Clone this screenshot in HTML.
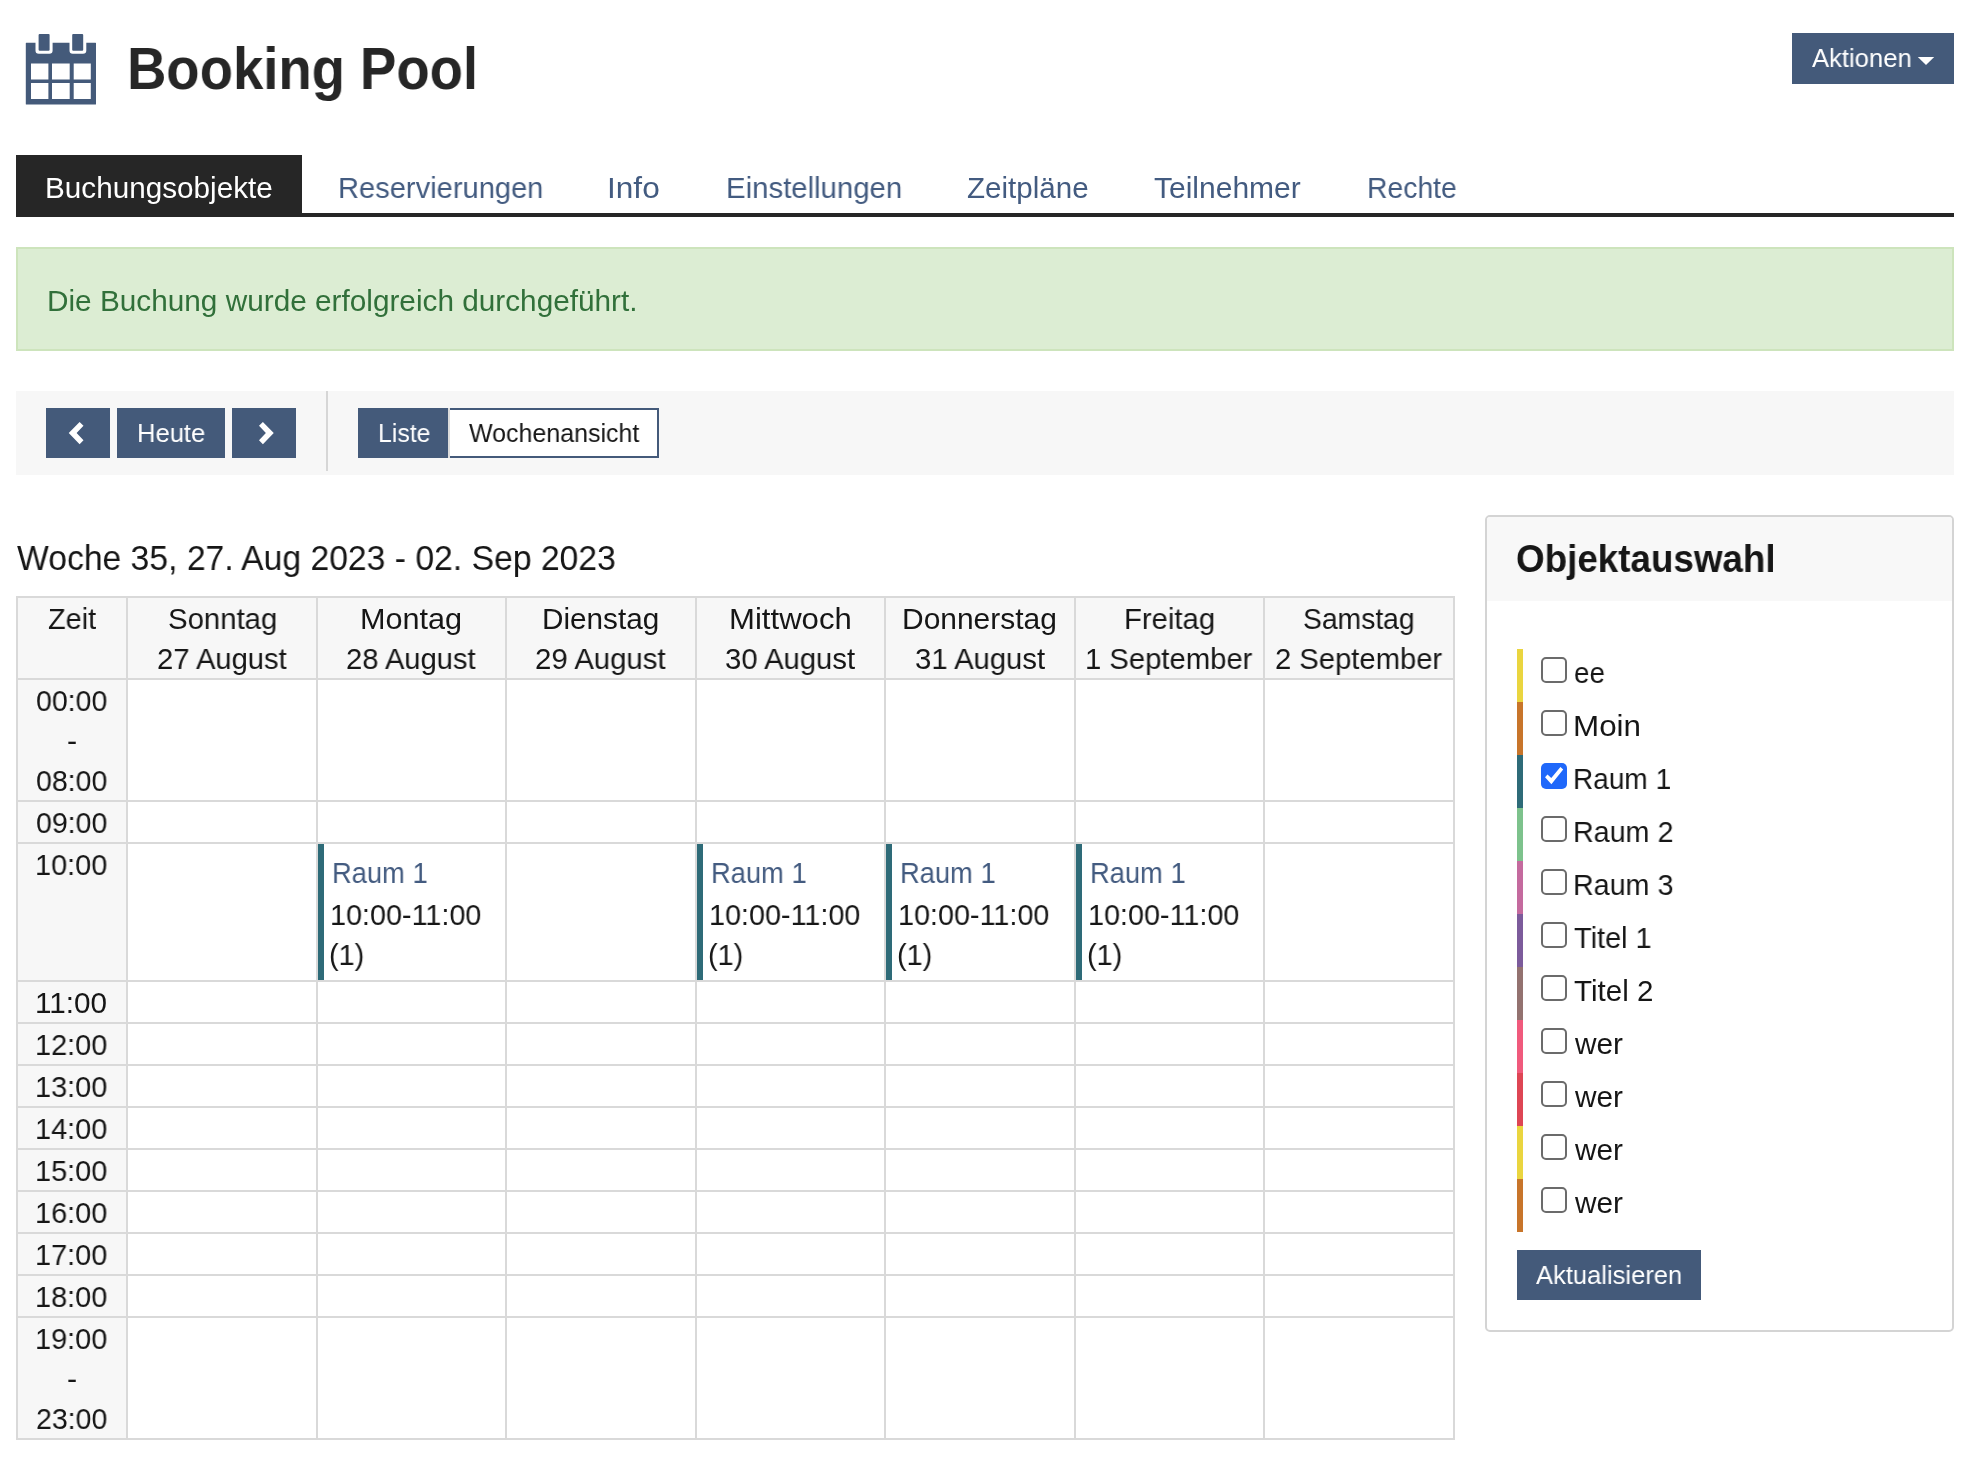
<!DOCTYPE html>
<html><head><meta charset="utf-8"><title>Booking Pool</title>
<style>
html,body{margin:0;padding:0;background:#fff;}
body{width:1974px;height:1474px;position:relative;overflow:hidden;font-family:"Liberation Sans",sans-serif;}
.t{position:absolute;will-change:transform;white-space:pre;transform-origin:0 0;font-family:"Liberation Sans",sans-serif;}
</style></head><body>
<svg style="position:absolute;left:16px;top:26px" width="90" height="90" viewBox="0 0 90 90">
<path fill="#445a7a" fill-rule="evenodd" d="M9.8 17.3 Q9.8 16.8 10.3 16.8 H19.5 V24.5 Q19.5 27.8 22.8 27.8 H33.3 Q36.6 27.8 36.6 24.5 V16.8 H53.5 V24.5 Q53.5 27.8 56.8 27.8 H67 Q70.3 27.8 70.3 24.5 V16.8 H79.5 Q80 16.8 80 17.3 V77.9 Q80 78.4 79.5 78.4 H10.3 Q9.8 78.4 9.8 77.9 Z
M15 37.5 H32.4 V53.4 H15 Z M36 37.5 H53.7 V53.4 H36 Z M57.7 37.5 H74.8 V53.4 H57.7 Z
M15 57.1 H32.4 V73 H15 Z M36 57.1 H53.7 V73 H36 Z M57.7 57.1 H74.8 V73 H57.7 Z"/>
<rect x="22.6" y="7.9" width="11" height="16.8" rx="1" fill="#445a7a"/>
<rect x="56.2" y="7.9" width="11" height="16.8" rx="1" fill="#445a7a"/>
</svg>
<div style="position:absolute;left:1792px;top:33px;width:162px;height:51px;background:#445a7a"></div>
<svg style="position:absolute;left:1916px;top:55px" width="20" height="12" viewBox="0 0 20 12"><path d="M1.8 1.9 H18.2 L10 10.1 Z" fill="#fff"/></svg>
<div style="position:absolute;left:16px;top:155px;width:286px;height:62px;background:#262626"></div>
<div style="position:absolute;left:16px;top:213px;width:1938px;height:4px;background:#262626"></div>
<div style="position:absolute;left:16px;top:247px;width:1938px;height:104px;background:#dcedd3;border:2px solid #cde4bc;box-sizing:border-box"></div>
<div style="position:absolute;left:16px;top:391px;width:1938px;height:84px;background:#f7f7f7"></div>
<div style="position:absolute;left:326px;top:391px;width:2px;height:80px;background:#d6d6d6"></div>
<div style="position:absolute;left:46px;top:408px;width:64px;height:50px;background:#445a7a"></div>
<div style="position:absolute;left:117px;top:408px;width:108px;height:50px;background:#445a7a"></div>
<div style="position:absolute;left:232px;top:408px;width:64px;height:50px;background:#445a7a"></div>
<div style="position:absolute;left:358px;top:408px;width:90px;height:50px;background:#445a7a"></div>
<div style="position:absolute;left:448px;top:408px;width:211px;height:50px;background:#fff;border:2px solid #445a7a;border-left:none;box-sizing:border-box"></div>
<div style="position:absolute;left:448px;top:408px;width:2px;height:50px;background:#dcdcdc"></div>
<svg style="position:absolute;left:0;top:0" width="300" height="460"><path fill="#fff" d="M68.75 433 L79.6 421.9 L83.5 425.8 L76.6 433 L83.5 440.2 L79.6 444.2 Z"/><path fill="#fff" d="M273.75 433 L262.9 421.9 L259 425.8 L265.9 433 L259 440.2 L262.9 444.2 Z"/></svg>
<div style="position:absolute;left:16px;top:596px;width:1439px;height:84px;background:#f7f7f7"></div>
<div style="position:absolute;left:16px;top:680px;width:112px;height:760px;background:#f7f7f7"></div>
<div style="position:absolute;left:16px;top:596px;width:2px;height:844px;background:#d9d9d9"></div>
<div style="position:absolute;left:126px;top:596px;width:2px;height:844px;background:#d9d9d9"></div>
<div style="position:absolute;left:316px;top:596px;width:2px;height:844px;background:#d9d9d9"></div>
<div style="position:absolute;left:505px;top:596px;width:2px;height:844px;background:#d9d9d9"></div>
<div style="position:absolute;left:695px;top:596px;width:2px;height:844px;background:#d9d9d9"></div>
<div style="position:absolute;left:884px;top:596px;width:2px;height:844px;background:#d9d9d9"></div>
<div style="position:absolute;left:1074px;top:596px;width:2px;height:844px;background:#d9d9d9"></div>
<div style="position:absolute;left:1263px;top:596px;width:2px;height:844px;background:#d9d9d9"></div>
<div style="position:absolute;left:1453px;top:596px;width:2px;height:844px;background:#d9d9d9"></div>
<div style="position:absolute;left:16px;top:596px;width:1439px;height:2px;background:#d9d9d9"></div>
<div style="position:absolute;left:16px;top:678px;width:1439px;height:2px;background:#d9d9d9"></div>
<div style="position:absolute;left:16px;top:800px;width:1439px;height:2px;background:#d9d9d9"></div>
<div style="position:absolute;left:16px;top:842px;width:1439px;height:2px;background:#d9d9d9"></div>
<div style="position:absolute;left:16px;top:980px;width:1439px;height:2px;background:#d9d9d9"></div>
<div style="position:absolute;left:16px;top:1022px;width:1439px;height:2px;background:#d9d9d9"></div>
<div style="position:absolute;left:16px;top:1064px;width:1439px;height:2px;background:#d9d9d9"></div>
<div style="position:absolute;left:16px;top:1106px;width:1439px;height:2px;background:#d9d9d9"></div>
<div style="position:absolute;left:16px;top:1148px;width:1439px;height:2px;background:#d9d9d9"></div>
<div style="position:absolute;left:16px;top:1190px;width:1439px;height:2px;background:#d9d9d9"></div>
<div style="position:absolute;left:16px;top:1232px;width:1439px;height:2px;background:#d9d9d9"></div>
<div style="position:absolute;left:16px;top:1274px;width:1439px;height:2px;background:#d9d9d9"></div>
<div style="position:absolute;left:16px;top:1316px;width:1439px;height:2px;background:#d9d9d9"></div>
<div style="position:absolute;left:16px;top:1438px;width:1439px;height:2px;background:#d9d9d9"></div>
<div style="position:absolute;left:318px;top:844px;width:6px;height:136px;background:#2e6b78"></div>
<div style="position:absolute;left:697px;top:844px;width:6px;height:136px;background:#2e6b78"></div>
<div style="position:absolute;left:886px;top:844px;width:6px;height:136px;background:#2e6b78"></div>
<div style="position:absolute;left:1076px;top:844px;width:6px;height:136px;background:#2e6b78"></div>
<div style="position:absolute;left:1485px;top:515px;width:469px;height:817px;border:2px solid #d4d4d4;border-radius:5px;box-sizing:border-box;background:#fff"></div>
<div style="position:absolute;left:1487px;top:517px;width:465px;height:84px;background:#f8f8f8;border-radius:3px 3px 0 0"></div>
<div style="position:absolute;left:1517px;top:649px;width:6px;height:53px;background:#ead53f"></div>
<div style="position:absolute;left:1541px;top:657px;width:26px;height:26px;border:2px solid #6b6b6b;border-radius:5px;box-sizing:border-box;background:#fff"></div>
<div style="position:absolute;left:1517px;top:702px;width:6px;height:53px;background:#c8752a"></div>
<div style="position:absolute;left:1541px;top:710px;width:26px;height:26px;border:2px solid #6b6b6b;border-radius:5px;box-sizing:border-box;background:#fff"></div>
<div style="position:absolute;left:1517px;top:755px;width:6px;height:53px;background:#2e6b78"></div>
<div style="position:absolute;left:1541px;top:763px;width:26px;height:26px;background:#1f68fa;border-radius:5px"></div>
<svg style="position:absolute;left:1541px;top:763px" width="26" height="26" viewBox="0 0 26 26"><path d="M4.04 14.3 L6.48 11.6 L10.27 14.9 L19.4 4.04 L22.2 6.5 L10.4 21.3 Z" fill="#fff"/></svg>
<div style="position:absolute;left:1517px;top:808px;width:6px;height:53px;background:#7dc28c"></div>
<div style="position:absolute;left:1541px;top:816px;width:26px;height:26px;border:2px solid #6b6b6b;border-radius:5px;box-sizing:border-box;background:#fff"></div>
<div style="position:absolute;left:1517px;top:861px;width:6px;height:53px;background:#c46a9e"></div>
<div style="position:absolute;left:1541px;top:869px;width:26px;height:26px;border:2px solid #6b6b6b;border-radius:5px;box-sizing:border-box;background:#fff"></div>
<div style="position:absolute;left:1517px;top:914px;width:6px;height:53px;background:#7c5b9b"></div>
<div style="position:absolute;left:1541px;top:922px;width:26px;height:26px;border:2px solid #6b6b6b;border-radius:5px;box-sizing:border-box;background:#fff"></div>
<div style="position:absolute;left:1517px;top:967px;width:6px;height:53px;background:#937270"></div>
<div style="position:absolute;left:1541px;top:975px;width:26px;height:26px;border:2px solid #6b6b6b;border-radius:5px;box-sizing:border-box;background:#fff"></div>
<div style="position:absolute;left:1517px;top:1020px;width:6px;height:53px;background:#f05a7c"></div>
<div style="position:absolute;left:1541px;top:1028px;width:26px;height:26px;border:2px solid #6b6b6b;border-radius:5px;box-sizing:border-box;background:#fff"></div>
<div style="position:absolute;left:1517px;top:1073px;width:6px;height:53px;background:#de4654"></div>
<div style="position:absolute;left:1541px;top:1081px;width:26px;height:26px;border:2px solid #6b6b6b;border-radius:5px;box-sizing:border-box;background:#fff"></div>
<div style="position:absolute;left:1517px;top:1126px;width:6px;height:53px;background:#ead53f"></div>
<div style="position:absolute;left:1541px;top:1134px;width:26px;height:26px;border:2px solid #6b6b6b;border-radius:5px;box-sizing:border-box;background:#fff"></div>
<div style="position:absolute;left:1517px;top:1179px;width:6px;height:53px;background:#c8752a"></div>
<div style="position:absolute;left:1541px;top:1187px;width:26px;height:26px;border:2px solid #6b6b6b;border-radius:5px;box-sizing:border-box;background:#fff"></div>
<div style="position:absolute;left:1517px;top:1250px;width:184px;height:50px;background:#445a7a"></div>
<div class=t style="left:127.31px;top:40.00px;font-size:59px;line-height:59px;font-weight:700;color:#262626;transform:scaleX(0.9234)">Booking Pool</div>
<div class=t style="left:1812.00px;top:45.20px;font-size:26px;line-height:26px;font-weight:400;color:#fff;transform:scaleX(0.9860)">Aktionen</div>
<div class=t style="left:44.99px;top:173.00px;font-size:29.5px;line-height:29.5px;font-weight:400;color:#fff;transform:scaleX(1.0063)">Buchungsobjekte</div>
<div class=t style="left:337.63px;top:173.00px;font-size:29.5px;line-height:29.5px;font-weight:400;color:#435b80;transform:scaleX(0.9863)">Reservierungen</div>
<div class=t style="left:607.29px;top:173.00px;font-size:29.5px;line-height:29.5px;font-weight:400;color:#435b80;transform:scaleX(1.0711)">Info</div>
<div class=t style="left:725.81px;top:173.00px;font-size:29.5px;line-height:29.5px;font-weight:400;color:#435b80;transform:scaleX(0.9948)">Einstellungen</div>
<div class=t style="left:967.30px;top:173.00px;font-size:29.5px;line-height:29.5px;font-weight:400;color:#435b80;transform:scaleX(1.0017)">Zeitpläne</div>
<div class=t style="left:1154.28px;top:173.00px;font-size:29.5px;line-height:29.5px;font-weight:400;color:#435b80;transform:scaleX(1.0175)">Teilnehmer</div>
<div class=t style="left:1367.38px;top:173.00px;font-size:29.5px;line-height:29.5px;font-weight:400;color:#435b80;transform:scaleX(0.9611)">Rechte</div>
<div class=t style="left:47.48px;top:285.50px;font-size:29.5px;line-height:29.5px;font-weight:400;color:#31703a;transform:scaleX(1.0088)">Die Buchung wurde erfolgreich durchgeführt.</div>
<div class=t style="left:137.07px;top:420.00px;font-size:26.5px;line-height:26.5px;font-weight:400;color:#fff;transform:scaleX(0.9647)">Heute</div>
<div class=t style="left:377.93px;top:420.00px;font-size:26.5px;line-height:26.5px;font-weight:400;color:#fff;transform:scaleX(0.9358)">Liste</div>
<div class=t style="left:469.00px;top:420.00px;font-size:26.5px;line-height:26.5px;font-weight:400;color:#161616;transform:scaleX(0.9428)">Wochenansicht</div>
<div class=t style="left:16.90px;top:540.50px;font-size:34.5px;line-height:34.5px;font-weight:400;color:#161616;transform:scaleX(0.9766)">Woche 35, 27. Aug 2023 - 02. Sep 2023</div>
<div class=t style="left:1516.49px;top:540.00px;font-size:38.5px;line-height:38.5px;font-weight:700;color:#161616;transform:scaleX(0.9554)">Objektauswahl</div>
<div class=t style="left:1536.20px;top:1262.00px;font-size:26.5px;line-height:26.5px;font-weight:400;color:#fff;transform:scaleX(0.9633)">Aktualisieren</div>
<div class=t style="left:47.52px;top:604.00px;font-size:29.5px;line-height:29.5px;font-weight:400;color:#161616;transform:scaleX(0.9792)">Zeit</div>
<div class=t style="left:167.81px;top:604.00px;font-size:29.5px;line-height:29.5px;font-weight:400;color:#161616;transform:scaleX(0.9944)">Sonntag</div>
<div class=t style="left:156.76px;top:644.00px;font-size:29.5px;line-height:29.5px;font-weight:400;color:#161616;transform:scaleX(0.9885)">27 August</div>
<div class=t style="left:360.12px;top:604.00px;font-size:29.5px;line-height:29.5px;font-weight:400;color:#161616;transform:scaleX(1.0379)">Montag</div>
<div class=t style="left:346.31px;top:644.00px;font-size:29.5px;line-height:29.5px;font-weight:400;color:#161616;transform:scaleX(0.9877)">28 August</div>
<div class=t style="left:542.09px;top:604.00px;font-size:29.5px;line-height:29.5px;font-weight:400;color:#161616;transform:scaleX(1.0071)">Dienstag</div>
<div class=t style="left:535.30px;top:644.00px;font-size:29.5px;line-height:29.5px;font-weight:400;color:#161616;transform:scaleX(0.9954)">29 August</div>
<div class=t style="left:728.79px;top:604.00px;font-size:29.5px;line-height:29.5px;font-weight:400;color:#161616;transform:scaleX(1.0549)">Mittwoch</div>
<div class=t style="left:725.06px;top:644.00px;font-size:29.5px;line-height:29.5px;font-weight:400;color:#161616;transform:scaleX(0.9915)">30 August</div>
<div class=t style="left:902.32px;top:604.00px;font-size:29.5px;line-height:29.5px;font-weight:400;color:#161616;transform:scaleX(1.0154)">Donnerstag</div>
<div class=t style="left:914.56px;top:644.00px;font-size:29.5px;line-height:29.5px;font-weight:400;color:#161616;transform:scaleX(0.9915)">31 August</div>
<div class=t style="left:1123.87px;top:604.00px;font-size:29.5px;line-height:29.5px;font-weight:400;color:#161616;transform:scaleX(0.9920)">Freitag</div>
<div class=t style="left:1085.27px;top:644.00px;font-size:29.5px;line-height:29.5px;font-weight:400;color:#161616;transform:scaleX(0.9910)">1 September</div>
<div class=t style="left:1303.39px;top:604.00px;font-size:29.5px;line-height:29.5px;font-weight:400;color:#161616;transform:scaleX(0.9588)">Samstag</div>
<div class=t style="left:1275.36px;top:644.00px;font-size:29.5px;line-height:29.5px;font-weight:400;color:#161616;transform:scaleX(0.9898)">2 September</div>
<div class=t style="left:36.28px;top:686.00px;font-size:29.5px;line-height:29.5px;font-weight:400;color:#161616;transform:scaleX(0.9653)">00:00</div>
<div class=t style="left:36.28px;top:808.00px;font-size:29.5px;line-height:29.5px;font-weight:400;color:#161616;transform:scaleX(0.9653)">09:00</div>
<div class=t style="left:35.29px;top:850.00px;font-size:29.5px;line-height:29.5px;font-weight:400;color:#161616;transform:scaleX(0.9789)">10:00</div>
<div class=t style="left:35.24px;top:988.00px;font-size:29.5px;line-height:29.5px;font-weight:400;color:#161616;transform:scaleX(1.0072)">11:00</div>
<div class=t style="left:35.29px;top:1030.00px;font-size:29.5px;line-height:29.5px;font-weight:400;color:#161616;transform:scaleX(0.9789)">12:00</div>
<div class=t style="left:35.29px;top:1072.00px;font-size:29.5px;line-height:29.5px;font-weight:400;color:#161616;transform:scaleX(0.9789)">13:00</div>
<div class=t style="left:35.29px;top:1114.00px;font-size:29.5px;line-height:29.5px;font-weight:400;color:#161616;transform:scaleX(0.9789)">14:00</div>
<div class=t style="left:35.29px;top:1156.00px;font-size:29.5px;line-height:29.5px;font-weight:400;color:#161616;transform:scaleX(0.9789)">15:00</div>
<div class=t style="left:35.29px;top:1198.00px;font-size:29.5px;line-height:29.5px;font-weight:400;color:#161616;transform:scaleX(0.9789)">16:00</div>
<div class=t style="left:35.29px;top:1240.00px;font-size:29.5px;line-height:29.5px;font-weight:400;color:#161616;transform:scaleX(0.9789)">17:00</div>
<div class=t style="left:35.29px;top:1282.00px;font-size:29.5px;line-height:29.5px;font-weight:400;color:#161616;transform:scaleX(0.9789)">18:00</div>
<div class=t style="left:35.29px;top:1324.00px;font-size:29.5px;line-height:29.5px;font-weight:400;color:#161616;transform:scaleX(0.9789)">19:00</div>
<div class=t style="left:66.85px;top:726.00px;font-size:29.5px;line-height:29.5px;font-weight:400;color:#161616;transform:scaleX(1.0300)">-</div>
<div class=t style="left:36.28px;top:766.00px;font-size:29.5px;line-height:29.5px;font-weight:400;color:#161616;transform:scaleX(0.9653)">08:00</div>
<div class=t style="left:66.85px;top:1364.00px;font-size:29.5px;line-height:29.5px;font-weight:400;color:#161616;transform:scaleX(1.0300)">-</div>
<div class=t style="left:36.28px;top:1404.00px;font-size:29.5px;line-height:29.5px;font-weight:400;color:#161616;transform:scaleX(0.9653)">23:00</div>
<div class=t style="left:331.55px;top:858.00px;font-size:29.5px;line-height:29.5px;font-weight:400;color:#435b80;transform:scaleX(0.9260)">Raum 1</div>
<div class=t style="left:330.35px;top:900.00px;font-size:29.5px;line-height:29.5px;font-weight:400;color:#161616;transform:scaleX(0.9750)">10:00-11:00</div>
<div class=t style="left:328.64px;top:940.00px;font-size:29.5px;line-height:29.5px;font-weight:400;color:#161616;transform:scaleX(0.9781)">(1)</div>
<div class=t style="left:710.55px;top:858.00px;font-size:29.5px;line-height:29.5px;font-weight:400;color:#435b80;transform:scaleX(0.9260)">Raum 1</div>
<div class=t style="left:709.35px;top:900.00px;font-size:29.5px;line-height:29.5px;font-weight:400;color:#161616;transform:scaleX(0.9750)">10:00-11:00</div>
<div class=t style="left:707.64px;top:940.00px;font-size:29.5px;line-height:29.5px;font-weight:400;color:#161616;transform:scaleX(0.9781)">(1)</div>
<div class=t style="left:899.55px;top:858.00px;font-size:29.5px;line-height:29.5px;font-weight:400;color:#435b80;transform:scaleX(0.9260)">Raum 1</div>
<div class=t style="left:898.35px;top:900.00px;font-size:29.5px;line-height:29.5px;font-weight:400;color:#161616;transform:scaleX(0.9750)">10:00-11:00</div>
<div class=t style="left:896.64px;top:940.00px;font-size:29.5px;line-height:29.5px;font-weight:400;color:#161616;transform:scaleX(0.9781)">(1)</div>
<div class=t style="left:1089.55px;top:858.00px;font-size:29.5px;line-height:29.5px;font-weight:400;color:#435b80;transform:scaleX(0.9260)">Raum 1</div>
<div class=t style="left:1088.35px;top:900.00px;font-size:29.5px;line-height:29.5px;font-weight:400;color:#161616;transform:scaleX(0.9750)">10:00-11:00</div>
<div class=t style="left:1086.64px;top:940.00px;font-size:29.5px;line-height:29.5px;font-weight:400;color:#161616;transform:scaleX(0.9781)">(1)</div>
<div class=t style="left:1573.86px;top:658.00px;font-size:29.5px;line-height:29.5px;font-weight:400;color:#161616;transform:scaleX(0.9419)">ee</div>
<div class=t style="left:1572.87px;top:711.00px;font-size:29.5px;line-height:29.5px;font-weight:400;color:#161616;transform:scaleX(1.0633)">Moin</div>
<div class=t style="left:1573.10px;top:764.00px;font-size:29.5px;line-height:29.5px;font-weight:400;color:#161616;transform:scaleX(0.9500)">Raum 1</div>
<div class=t style="left:1573.06px;top:817.00px;font-size:29.5px;line-height:29.5px;font-weight:400;color:#161616;transform:scaleX(0.9720)">Raum 2</div>
<div class=t style="left:1573.06px;top:870.00px;font-size:29.5px;line-height:29.5px;font-weight:400;color:#161616;transform:scaleX(0.9720)">Raum 3</div>
<div class=t style="left:1574.02px;top:923.00px;font-size:29.5px;line-height:29.5px;font-weight:400;color:#161616;transform:scaleX(0.9805)">Titel 1</div>
<div class=t style="left:1574.00px;top:976.00px;font-size:29.5px;line-height:29.5px;font-weight:400;color:#161616;transform:scaleX(1.0013)">Titel 2</div>
<div class=t style="left:1575.00px;top:1029.00px;font-size:29.5px;line-height:29.5px;font-weight:400;color:#161616;transform:scaleX(1.0106)">wer</div>
<div class=t style="left:1575.00px;top:1082.00px;font-size:29.5px;line-height:29.5px;font-weight:400;color:#161616;transform:scaleX(1.0106)">wer</div>
<div class=t style="left:1575.00px;top:1135.00px;font-size:29.5px;line-height:29.5px;font-weight:400;color:#161616;transform:scaleX(1.0106)">wer</div>
<div class=t style="left:1575.00px;top:1188.00px;font-size:29.5px;line-height:29.5px;font-weight:400;color:#161616;transform:scaleX(1.0106)">wer</div>
</body></html>
